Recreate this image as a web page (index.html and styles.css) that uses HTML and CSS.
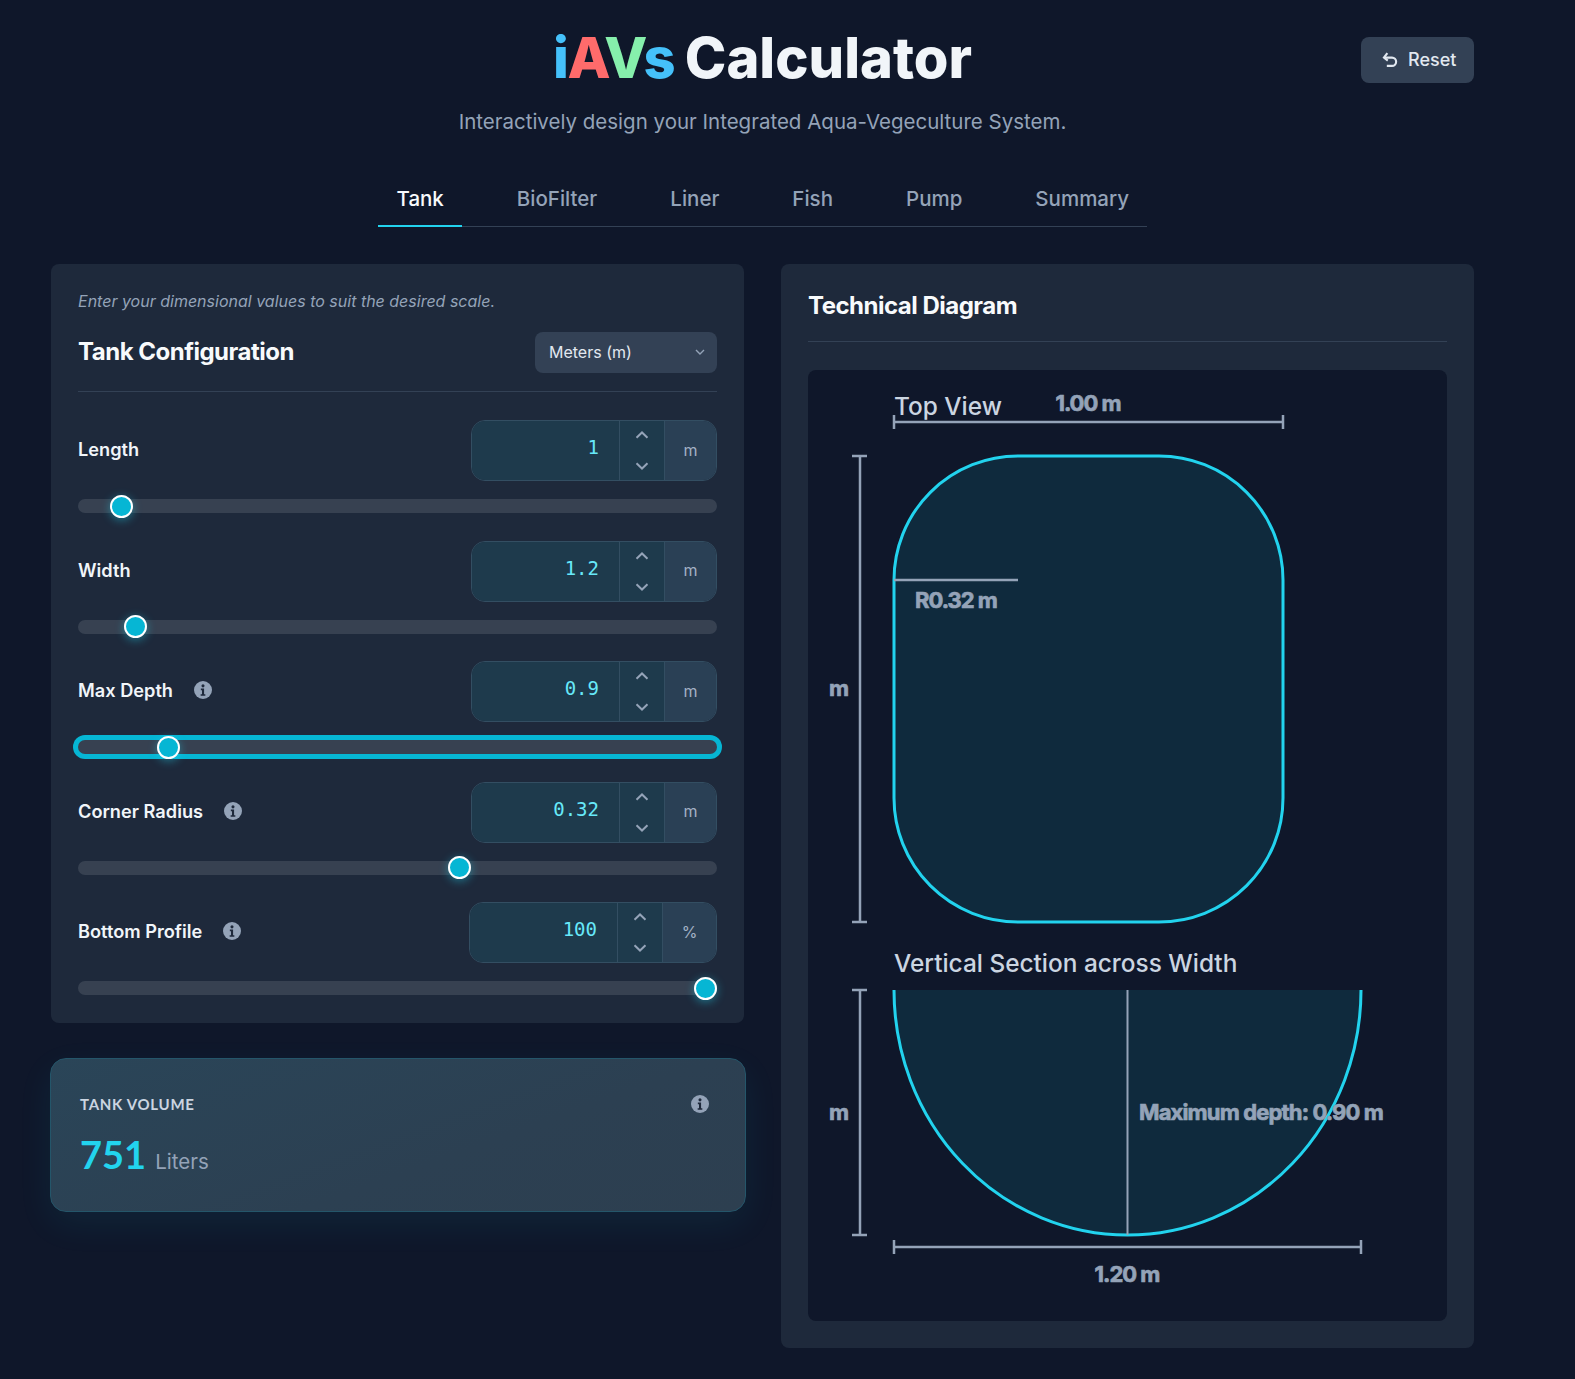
FILE: index.html
```html
<!DOCTYPE html>
<html>
<head>
  <title>iAVs Calculator</title>
  <link rel="stylesheet" href="styles.css">
</head>
<body>
  <svg class="icon-defs" width="0" height="0">
    <symbol id="icon-info" viewBox="0 0 20 20">
      <circle cx="10" cy="10" r="10" fill="currentColor"/>
      <circle cx="10" cy="5.4" r="1.7" fill="#1e293b"/>
      <path d="M7.6 8.4h3.6v6.2h1.4v1.8H7.4v-1.8h1.5v-4.4H7.6z" fill="#1e293b"/>
    </symbol>
    <symbol id="icon-up" viewBox="0 0 14 8">
      <path d="M1.5 6.8 7 1.5l5.5 5.3" fill="none" stroke="currentColor" stroke-width="2"/>
    </symbol>
    <symbol id="icon-down" viewBox="0 0 14 8">
      <path d="M1.5 1.2 7 6.500l5.500-5.300" fill="none" stroke="currentColor" stroke-width="2"/>
    </symbol>
  </svg>

  <div class="page">
    <header class="top">
      <div></div>
      <div class="top-title">
        <h1><span class="brand"><span class="c-blue">i</span><span class="c-red">A</span><span class="c-green">V</span><span class="c-blue">s</span></span> Calculator</h1>
        <p>Interactively design your Integrated Aqua-Vegeculture System.</p>
      </div>
      <button class="reset-btn">
        <svg width="18" height="18" viewBox="0 0 17 17" fill="none" stroke="currentColor" stroke-width="2">
          <path d="M3 7.2h7.4a3.9 3.9 0 0 1 0 7.8H5.5"/>
          <path d="M6 3 2.8 7.2 6.4 10"/>
        </svg>
        Reset
      </button>
    </header>

    <nav class="tabs">
      <a class="tab active">Tank</a>
      <a class="tab">BioFilter</a>
      <a class="tab">Liner</a>
      <a class="tab">Fish</a>
      <a class="tab">Pump</a>
      <a class="tab">Summary</a>
    </nav>

    <main class="columns">
      <div class="col-left">
        <section class="panel config">
          <p class="hint">Enter your dimensional values to suit the desired scale.</p>
          <div class="config-head">
            <h2>Tank Configuration</h2>
            <div class="unit-select">
              Meters (m)
              <svg width="10" height="6" viewBox="0 0 10 6" fill="none" stroke="currentColor" stroke-width="1.4"><path d="M1 1l4 4 4-4"/></svg>
            </div>
          </div>

          <div class="field">
            <div class="field-row">
              <label>Length</label>
              <div class="num-group">
                <input class="num-input" type="text" value="1">
                <div class="stepper">
                  <svg width="14" height="8"><use href="#icon-up"/></svg>
                  <svg width="14" height="8"><use href="#icon-down"/></svg>
                </div>
                <span class="num-unit">m</span>
              </div>
            </div>
            <input class="slider" type="range" min="0" max="1000" value="52">
          </div>

          <div class="field">
            <div class="field-row">
              <label>Width</label>
              <div class="num-group">
                <input class="num-input" type="text" value="1.2">
                <div class="stepper">
                  <svg width="14" height="8"><use href="#icon-up"/></svg>
                  <svg width="14" height="8"><use href="#icon-down"/></svg>
                </div>
                <span class="num-unit">m</span>
              </div>
            </div>
            <input class="slider" type="range" min="0" max="1000" value="75">
          </div>

          <div class="field">
            <div class="field-row">
              <label>Max Depth <svg class="info" width="18" height="18"><use href="#icon-info"/></svg></label>
              <div class="num-group">
                <input class="num-input" type="text" value="0.9">
                <div class="stepper">
                  <svg width="14" height="8"><use href="#icon-up"/></svg>
                  <svg width="14" height="8"><use href="#icon-down"/></svg>
                </div>
                <span class="num-unit">m</span>
              </div>
            </div>
            <input class="slider focused" type="range" min="0" max="1000" value="129">
          </div>

          <div class="field">
            <div class="field-row">
              <label>Corner Radius <svg class="info" width="18" height="18"><use href="#icon-info"/></svg></label>
              <div class="num-group">
                <input class="num-input" type="text" value="0.32">
                <div class="stepper">
                  <svg width="14" height="8"><use href="#icon-up"/></svg>
                  <svg width="14" height="8"><use href="#icon-down"/></svg>
                </div>
                <span class="num-unit">m</span>
              </div>
            </div>
            <input class="slider" type="range" min="0" max="1000" value="600">
          </div>

          <div class="field">
            <div class="field-row">
              <label>Bottom Profile <svg class="info" width="18" height="18"><use href="#icon-info"/></svg></label>
              <div class="num-group wide">
                <input class="num-input" type="text" value="100">
                <div class="stepper">
                  <svg width="14" height="8"><use href="#icon-up"/></svg>
                  <svg width="14" height="8"><use href="#icon-down"/></svg>
                </div>
                <span class="num-unit">%</span>
              </div>
            </div>
            <input class="slider" type="range" min="0" max="1000" value="1000">
          </div>
        </section>

        <section class="volume-card">
          <div class="volume-head">
            <span>TANK VOLUME</span>
            <svg class="volume-info" width="18" height="18"><use href="#icon-info"/></svg>
          </div>
          <div class="volume-value"><strong>751</strong> <span>Liters</span></div>
        </section>
      </div>

      <section class="panel diagram-panel">
        <h2>Technical Diagram</h2>
        <div class="diagram">
          <svg class="drawing" width="639" height="951" viewBox="808 370 639 951">
            <text class="view-title" x="894" y="415">Top View</text>
            <text class="dim-text" x="1088" y="411" text-anchor="middle">1.00 m</text>
            <path class="dim" d="M894 422H1283M894 415V429M1283 415V429"/>
            <path class="dim" d="M860 456V922M852 456H867M852 922H867"/>
            <rect class="tank" x="894" y="456" width="389" height="466" rx="124" ry="124"/>
            <path class="dim" d="M894 580H1018"/>
            <text class="dim-text" x="915" y="608">R0.32 m</text>
            <text class="dim-text" x="829" y="696">m</text>

            <text class="view-title" x="894" y="972">Vertical Section across Width</text>
            <path class="section-fill" d="M894 990A233.5 245 0 0 0 1361 990Z"/>
            <path class="section-line" d="M894 990A233.5 245 0 0 0 1361 990"/>
            <path class="dim thin" d="M1127.500 990V1235"/>
            <path class="dim" d="M860 990V1235M852 990H867M852 1235H867"/>
            <path class="dim" d="M894 1247H1361M894 1240V1254M1361 1240V1254"/>
            <text class="dim-text" x="829" y="1120">m</text>
            <text class="dim-text wide-text" x="1139" y="1120">Maximum depth: 0.90 m</text>
            <text class="dim-text" x="1127" y="1282" text-anchor="middle">1.20 m</text>
          </svg>
        </div>
      </section>
    </main>
  </div>
</body>
</html>
```

FILE: styles.css
```css
* {
  box-sizing: border-box;
}

body {
  margin: 0;
  background-color: #0f172a;
  color: #f1f5f9;
  font-family: Inter, "Liberation Sans", sans-serif;
}

.icon-defs {
  position: absolute;
}

.page {
  width: 1423px;
  margin-left: 51px;
  padding-bottom: 31px;
}

.top {
  display: grid;
  grid-template-columns: 1fr auto 1fr;
  align-items: start;
  padding-top: 23px;
}

.top-title {
  text-align: center;
}

.top-title h1 {
  margin: 0;
  font-size: 56px;
  line-height: 70px;
  font-weight: 800;
  letter-spacing: 0;
  word-spacing: -1.5px;
  color: #f1f5f9;
}

.brand {
  letter-spacing: -1.5px;
}

.c-blue { color: #45c1fa; }
.c-red { color: #ff6b6b; }
.c-green { color: #86efac; }

.top-title p {
  margin: 15px 0 0;
  font-size: 20.5px;
  line-height: 28px;
  color: #94a3b8;
}

.reset-btn {
  justify-self: end;
  display: flex;
  align-items: center;
  gap: 9px;
  width: 113px;
  height: 46px;
  margin-top: 14px;
  padding: 0 0 2px 20px;
  border: none;
  border-radius: 8px;
  background-color: #334155;
  color: #e2e8f0;
  font-family: inherit;
  font-size: 18px;
  font-weight: 500;
}

.tabs {
  display: flex;
  gap: 36px;
  width: 769px;
  margin: 49px auto 37px;
  border-bottom: 1px solid #334155;
}

.tab {
  padding: 0 18.5px 12px;
  margin-bottom: -1px;
  font-size: 20.5px;
  line-height: 28px;
  font-weight: 500;
  color: #94a3b8;
  border-bottom: 2px solid transparent;
}

.tab.active {
  color: #f8fafc;
  border-bottom-color: #22d3ee;
}

.columns {
  display: grid;
  grid-template-columns: 693px 693px;
  gap: 37px;
  align-items: start;
}

.panel {
  background-color: #1e293b;
  border-radius: 8px;
  padding: 28px 27px;
}

.config {
  padding: 26px 27px 0;
  height: 759px;
}

.hint {
  margin: 0;
  font-size: 16px;
  line-height: 22px;
  font-style: italic;
  color: #94a3b8;
}

.config-head {
  display: flex;
  align-items: center;
  justify-content: space-between;
  margin-top: 20px;
  padding-bottom: 18px;
  border-bottom: 1px solid #334155;
  margin-bottom: 28px;
}

.config-head h2,
.diagram-panel h2 {
  margin: 0;
  font-size: 24px;
  line-height: 32px;
  font-weight: 700;
  letter-spacing: -0.5px;
  color: #f8fafc;
}

.config-head h2 {
  padding-bottom: 2px;
}

.unit-select {
  display: flex;
  align-items: center;
  justify-content: space-between;
  width: 182px;
  height: 41px;
  padding: 0 12px 1px 14px;
  border-radius: 8px;
  background-color: #334155;
  color: #e2e8f0;
  font-size: 16px;
}

.unit-select svg {
  color: #94a3b8;
}

.field {
  margin-bottom: 27.5px;
}

.field-row {
  display: flex;
  align-items: center;
  justify-content: space-between;
  margin-bottom: 18px;
}

.field-row label {
  display: flex;
  align-items: center;
  padding-bottom: 3px;
  font-size: 18.2px;
  font-weight: 600;
  color: #f1f5f9;
}

.info {
  margin-left: 21px;
  color: #94a3b8;
}

.num-group {
  display: flex;
  width: 246px;
  height: 61px;
  border: 1px solid #334e62;
  border-radius: 14px;
  overflow: hidden;
}

.num-group.wide {
  width: 248px;
}

.num-input {
  width: 147px;
  border: none;
  padding: 0 20px 7px 0;
  background-color: #1e3a4c;
  color: #67e8f9;
  font-family: "DejaVu Sans Mono", "Liberation Mono", monospace;
  font-size: 19px;
  text-align: right;
  outline: none;
}

.stepper {
  display: flex;
  flex-direction: column;
  align-items: center;
  justify-content: space-between;
  width: 46px;
  padding: 10px 0;
  border-left: 1px solid #334e62;
  border-right: 1px solid #334e62;
  background-color: #1e3a4c;
  color: #94a3b8;
}

.num-unit {
  flex: 1;
  display: flex;
  align-items: center;
  justify-content: center;
  padding-bottom: 2px;
  background-color: #2a4055;
  color: #a3b1c4;
  font-size: 16px;
}

.slider {
  display: block;
  width: 100%;
  height: 14px;
  margin: 0;
  border-radius: 7px;
  background-color: #374151;
  appearance: none;
  -webkit-appearance: none;
}

.slider::-webkit-slider-thumb {
  -webkit-appearance: none;
  width: 23px;
  height: 23px;
  border: 2px solid #fff;
  border-radius: 50%;
  background-color: #06b6d4;
  box-shadow: 0 2px 10px rgba(34, 211, 238, 0.45);
}

.slider.focused {
  outline: none;
  box-shadow: 0 0 0 5px #06b6d4;
}

.volume-card {
  margin: 35px -2px 0 -1px;
  height: 154px;
  padding: 36px 29px;
  border: 1px solid #24566a;
  border-radius: 16px;
  background: linear-gradient(160deg, #2a4558, #2c4052 60%, #2d3f50);
  box-shadow: 0 12px 36px rgba(34, 211, 238, 0.07);
}

.volume-head {
  display: flex;
  align-items: center;
  justify-content: space-between;
  font-family: Lato, sans-serif;
  font-size: 15px;
  font-weight: 700;
  letter-spacing: 0.7px;
  color: #cbd5e1;
}

.volume-info {
  margin-right: 7px;
  color: #94a3b8;
}

.volume-value {
  margin-top: 18px;
  font-family: Lato, sans-serif;
  color: #94a3b8;
}

.volume-value strong {
  font-size: 38px;
  font-weight: 700;
  color: #22d3ee;
}

.volume-value span {
  margin-left: 5px;
  font-family: Inter, sans-serif;
  font-size: 20.5px;
}

.diagram-panel {
  height: 1084px;
  padding-top: 26px;
}

.diagram-panel h2 {
  padding-bottom: 19px;
  border-bottom: 1px solid #334155;
  margin-bottom: 28px;
}

.diagram {
  width: 639px;
  height: 951px;
  border-radius: 8px;
  background-color: #0f172a;
}

.drawing {
  display: block;
}

.view-title {
  font-size: 24.4px;
  font-weight: 500;
  fill: #cbd5e1;
}

.dim-text {
  font-size: 22px;
  font-weight: 700;
  letter-spacing: -1px;
  fill: #94a3b8;
  stroke: #94a3b8;
  stroke-width: 0.7;
}

.dim-text.wide-text {
  letter-spacing: -0.85px;
}

.dim {
  fill: none;
  stroke: #94a3b8;
  stroke-width: 2.5;
}

.dim.thin {
  stroke-width: 2;
}

.tank,
.section-fill {
  fill: #0f2a3d;
}

.tank,
.section-line {
  stroke: #22d3ee;
  stroke-width: 3;
}

.section-fill {
  stroke: none;
}

.section-line {
  fill: none;
}
```
